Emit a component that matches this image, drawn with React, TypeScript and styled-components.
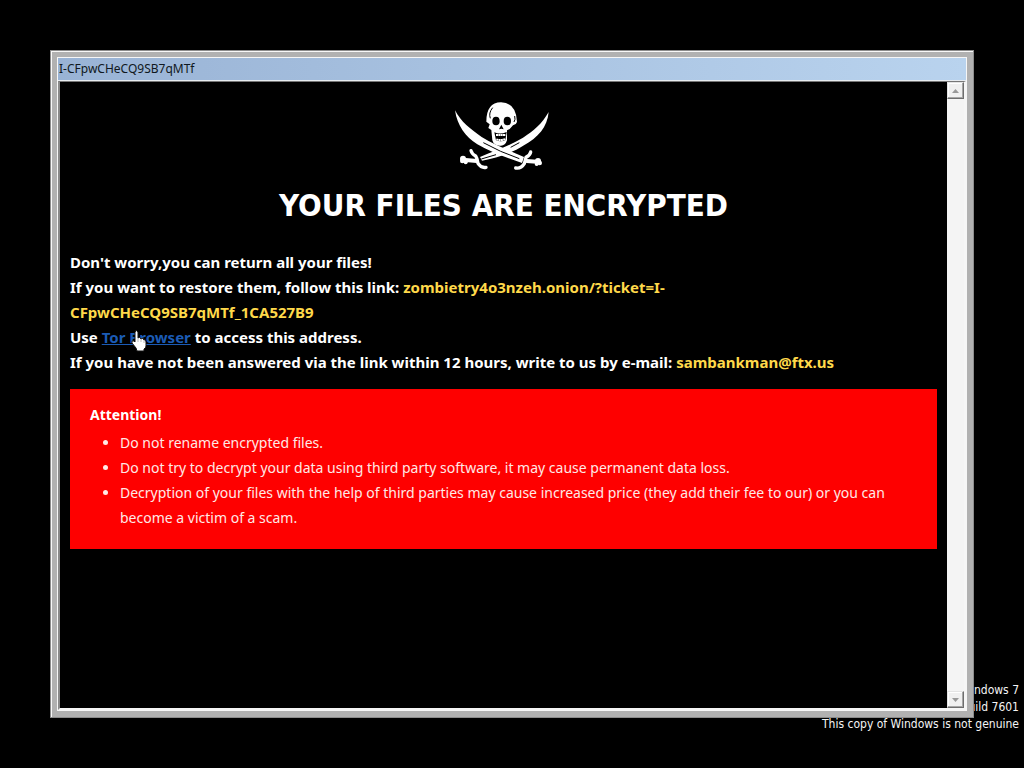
import React from "react";
import styled, { createGlobalStyle } from "styled-components";

const GlobalStyle = createGlobalStyle`
  * { box-sizing: border-box; }
  body { margin: 0; background: #000; }
`;

const captionFont = `"DejaVu Sans Condensed", "Noto Sans", sans-serif`;
const noteFont = `"Noto Sans", "Open Sans", sans-serif`;

const Desktop = styled.main`
  position: relative;
  display: flex;
  min-height: 100vh;
  padding: 50px;
  background: #000;
  overflow: hidden;
`;

const Watermark = styled.div`
  position: absolute;
  right: 5px;
  bottom: 35px;
  color: #f4f4f4;
  font: 12px/17px ${captionFont};
  text-align: right;
`;

const WindowFrame = styled.section`
  position: relative;
  z-index: 1;
  flex: 1;
  display: flex;
  flex-direction: column;
  min-width: 0;
  padding: 6px;
  border: 1px solid #8c8c8c;
  background: #b1b1b1;
  box-shadow: inset 1px 1px 0 #f8f8f8;
`;

const WindowInner = styled.div`
  flex: 1;
  display: flex;
  flex-direction: column;
  border: 1px solid #f6f6f6;
`;

const TitleBar = styled.header`
  height: 23px;
  padding-left: 1px;
  border-bottom: 1px solid #e8ecf0;
  background: linear-gradient(90deg, #99b3d5, #b9d3ee);
  color: #101820;
  font: 12px/22px ${noteFont};
`;

const Client = styled.div`
  flex: 1;
  display: flex;
  border: solid;
  border-width: 1px 2px 2px;
  border-color: #777 #f6f6f6 #f6f6f6 #8a8a8a;
`;

const Page = styled.article`
  flex: 1;
  min-width: 0;
  padding: 10px;
  background: #000;
  color: #fff;
  font: 15px/25px ${noteFont};
`;

const Emblem = styled.svg`
  display: block;
  margin: 0 auto;
`;

const Heading = styled.h1`
  margin: 13px 0 25px;
  font-family: ${captionFont};
  font-size: 31px;
  line-height: 40px;
  font-weight: 700;
  text-align: center;
`;

const Message = styled.p`
  margin: 0 0 14px;
  font-weight: 700;
`;

const Address = styled.span`
  color: #ffd94a;
`;

const TorLink = styled.a`
  position: relative;
  color: #1b5bb5;
`;

const HandCursor = styled.svg`
  position: absolute;
  left: 29px;
  top: 2px;
`;

const Warning = styled.section`
  padding: 13px 20px 19px;
  background: #fe0000;
  color: #ffe9e6;
`;

const WarningTitle = styled.h2`
  margin: 0 0 3px;
  color: #fff;
  font-size: 14px;
  line-height: 25px;
`;

const Rules = styled.ul`
  margin: 0;
  padding-left: 30px;
  font-size: 14px;
`;

const ScrollTrack = styled.div`
  width: 17px;
  display: flex;
  flex-direction: column;
  justify-content: space-between;
  background: #f4f4f4;
`;

const ScrollButton = styled.button`
  display: grid;
  place-items: center;
  width: 17px;
  height: 17px;
  padding: 0;
  border: 1px solid;
  border-color: #e4e4e4 #6e6e6e #6e6e6e #e4e4e4;
  background: #f0f0f0;
  box-shadow: inset -1px -1px 0 #a6a6a6, inset 1px 1px 0 #fff;
`;

function SkullEmblem() {
  return (
    <Emblem width="124" height="80" viewBox="6 6 372 240" role="img" aria-label="Skull and crossed swords">
      <path d="M326 66 C305 103 281 122 249 143 C210 167 165 182 120 201 L126 212 C168 204 216 190 252 166 C294 142 322 112 326 66Z" fill="#fff" />
      <path d="M45 61 C62 95 92 118 125 141 C165 165 205 180 252 201 L246 219 C200 203 150 186 112 163 C76 140 52 108 45 61Z" fill="#fff" />
      <path d="M130 158 Q180 186 238 206 M238 158 L212 172 M168 194 L124 207" fill="none" stroke="#000" strokeWidth="3" />
      <g fill="none" stroke="#fff" strokeLinecap="round">
        <path d="M93 182 Q96 193 107 198 Q112 205 114 220 Q124 235 138 232" strokeWidth="10" />
        <path d="M272 186 Q271 195 258 202 L253 221 Q243 237 227 234" strokeWidth="10" />
        <path d="M77 210 L110 213 M260 213 L290 215" strokeWidth="12" />
      </g>
      <g fill="#fff">
        <circle cx="69" cy="206" r="9" /><circle cx="67" cy="213" r="7" /><circle cx="77" cy="217" r="6" />
        <circle cx="294" cy="213" r="9" /><circle cx="299" cy="219" r="7" /><circle cx="290" cy="222" r="6" />
        <path d="M149 103 L139 95 Q139 38 183 37 Q229 38 231 96 Q229 104 219 106 L209 117 L201 121 L201 151 Q196 167 183 167 Q162 169 157 151 L154 120 L145 114Z" />
      </g>
      <g fill="#000">
        <ellipse cx="168" cy="93" rx="11" ry="13" />
        <ellipse cx="202" cy="93" rx="11" ry="13" />
        <path d="M184 104 L177 118 L184 116 L191 118Z" />
        <path d="M163 127 Q180 135 200 126 L196 151 Q182 157 168 151Z" />
      </g>
      <path d="M151 85 Q145 69 158 53 M224 78 Q227 89 222 96" fill="none" stroke="#000" strokeWidth="3" />
      <path d="M168 135 L197 135 M169 148 Q183 153 196 147" fill="none" stroke="#fff" strokeWidth="6" strokeDasharray="6 1" />
    </Emblem>
  );
}

function Hand() {
  return (
    <HandCursor width="16" height="23" viewBox="0 0 16 23" aria-hidden="true">
      <path d="M4 3 Q5 0 7 3 L7 9 Q9 7 10 10 Q12 8 13 11 Q15 10 15 13 L15 17 Q15 19 13 20 L13 22 L6 22 L5 19 L1 14 Q0 11 3 12 L4 13Z" fill="#fff" stroke="#111" strokeWidth="1" />
      <path d="M7 9 V13 M10 10 V13 M13 11 V14" stroke="#bbb" strokeWidth="1" />
    </HandCursor>
  );
}

export default function App() {
  return (
    <Desktop>
      <GlobalStyle />
      <Watermark>
        <div>Windows 7</div>
        <div>Build 7601</div>
        <div>This copy of Windows is not genuine</div>
      </Watermark>
      <WindowFrame>
        <WindowInner>
          <TitleBar>I-CFpwCHeCQ9SB7qMTf</TitleBar>
          <Client>
            <Page>
              <SkullEmblem />
              <Heading>YOUR FILES ARE ENCRYPTED</Heading>
              <Message>
                Don't worry,you can return all your files!
                <br />
                If you want to restore them, follow this link:{" "}
                <Address>
                  zombietry4o3nzeh.onion/?ticket=I-
                  <br />
                  CFpwCHeCQ9SB7qMTf_1CA527B9
                </Address>
                <br />
                Use <TorLink href="#tor">Tor Browser<Hand /></TorLink> to access this address.
                <br />
                If you have not been answered via the link within 12 hours, write to us by e-mail:{" "}
                <Address>sambankman@ftx.us</Address>
              </Message>
              <Warning>
                <WarningTitle>Attention!</WarningTitle>
                <Rules>
                  <li>Do not rename encrypted files.</li>
                  <li>Do not try to decrypt your data using third party software, it may cause permanent data loss.</li>
                  <li>
                    Decryption of your files with the help of third parties may cause increased price (they add their
                    fee to our) or you can become a victim of a scam.
                  </li>
                </Rules>
              </Warning>
            </Page>
            <ScrollTrack>
              <ScrollButton aria-label="Scroll up">
                <svg width="7" height="4" viewBox="0 0 7 4"><path d="M0 4 L3.5 0 L7 4Z" fill="#999" /></svg>
              </ScrollButton>
              <ScrollButton aria-label="Scroll down">
                <svg width="7" height="4" viewBox="0 0 7 4"><path d="M0 0 L3.5 4 L7 0Z" fill="#999" /></svg>
              </ScrollButton>
            </ScrollTrack>
          </Client>
        </WindowInner>
      </WindowFrame>
    </Desktop>
  );
}
